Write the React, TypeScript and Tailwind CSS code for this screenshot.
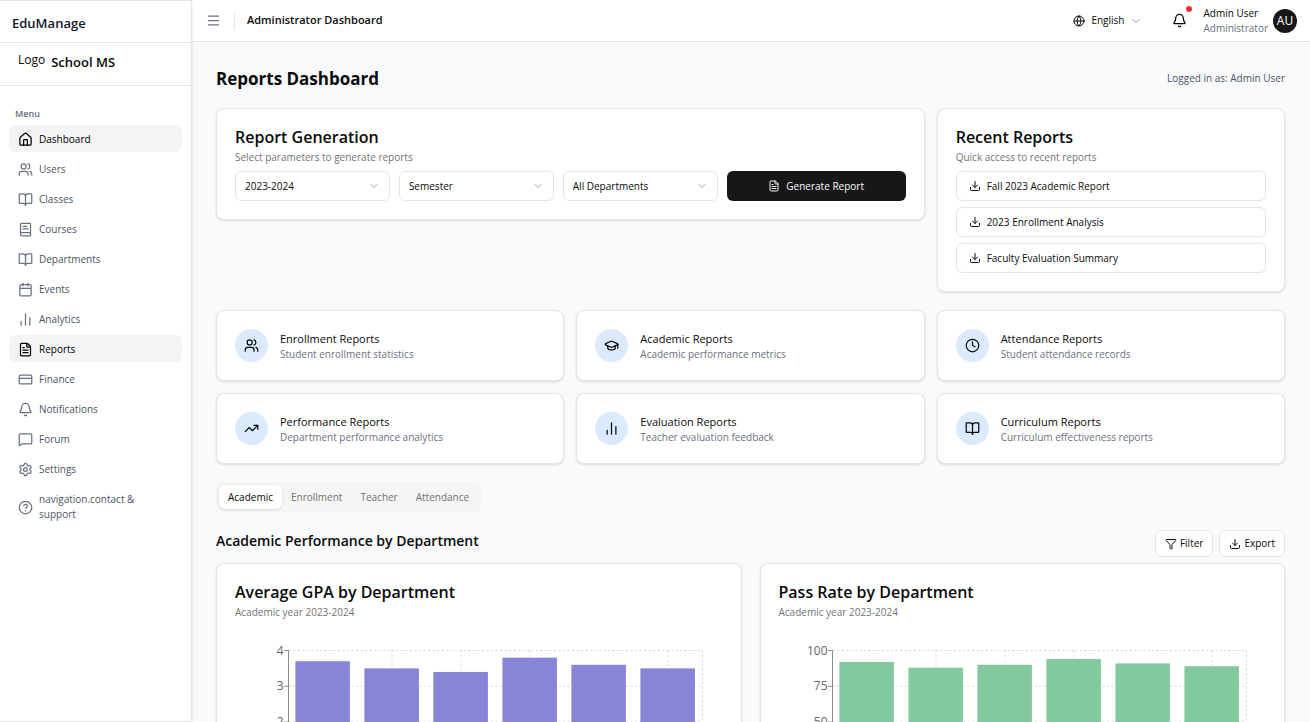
import { useLayoutEffect, useRef, useState } from "react";
import type { ReactNode } from "react";
import {
  Bell,
  BookOpen,
  BookText,
  Calendar,
  ChartNoAxesColumn,
  ChevronDown,
  CircleHelp,
  Clock,
  CreditCard,
  Download,
  FileText,
  Filter,
  Globe,
  GraduationCap,
  House,
  Menu,
  MessageSquare,
  Settings,
  TrendingUp,
  Users,
} from "lucide-react";
import type { LucideIcon } from "lucide-react";

const navItems: { label: string; icon: LucideIcon; active?: boolean }[] = [
  { label: "Dashboard", icon: House, active: true },
  { label: "Users", icon: Users },
  { label: "Classes", icon: BookOpen },
  { label: "Courses", icon: BookText },
  { label: "Departments", icon: BookOpen },
  { label: "Events", icon: Calendar },
  { label: "Analytics", icon: ChartNoAxesColumn },
  { label: "Reports", icon: FileText, active: true },
  { label: "Finance", icon: CreditCard },
  { label: "Notifications", icon: Bell },
  { label: "Forum", icon: MessageSquare },
  { label: "Settings", icon: Settings },
  { label: "navigation.contact & support", icon: CircleHelp },
];

const categories: { title: string; text: string; icon: LucideIcon }[] = [
  { title: "Enrollment Reports", text: "Student enrollment statistics", icon: Users },
  { title: "Academic Reports", text: "Academic performance metrics", icon: GraduationCap },
  { title: "Attendance Reports", text: "Student attendance records", icon: Clock },
  { title: "Performance Reports", text: "Department performance analytics", icon: TrendingUp },
  { title: "Evaluation Reports", text: "Teacher evaluation feedback", icon: ChartNoAxesColumn },
  { title: "Curriculum Reports", text: "Curriculum effectiveness reports", icon: BookOpen },
];

const recentReports = ["Fall 2023 Academic Report", "2023 Enrollment Analysis", "Faculty Evaluation Summary"];
const tabs = ["Academic", "Enrollment", "Teacher", "Attendance"];

function Card({ className = "", children }: { className?: string; children: ReactNode }) {
  return (
    <section className={`rounded-lg border border-neutral-200 bg-white p-[18px] shadow-sm ${className}`}>
      {children}
    </section>
  );
}

function CardHeading({ title, text }: { title: string; text: string }) {
  return (
    <header>
      <h3 className="text-[16px] leading-5 font-semibold">{title}</h3>
      <p className="mt-0.5 text-[10px] leading-4 text-neutral-500">{text}</p>
    </header>
  );
}

function SelectBox({ label, options }: { label: string; options: string[] }) {
  return (
    <div className="relative flex-1">
      <select
        aria-label={label}
        className="h-[30px] w-full appearance-none rounded-md border border-neutral-200 bg-white pl-[9px] text-[10px]"
      >
        {options.map((option) => (
          <option key={option}>{option}</option>
        ))}
      </select>
      <ChevronDown className="pointer-events-none absolute top-[9px] right-2.5 size-3 text-neutral-400" />
    </div>
  );
}

function BarChart({ values, max, color, label }: { values: number[]; max: number; color: string; label: string }) {
  const box = useRef<HTMLDivElement>(null);
  const [width, setWidth] = useState(487);

  useLayoutEffect(() => {
    const node = box.current;
    if (!node) return;
    const observer = new ResizeObserver(() => setWidth(node.clientWidth));
    observer.observe(node);
    setWidth(node.clientWidth);
    return () => observer.disconnect();
  }, []);

  const left = 53.5;
  const right = width - 20.5;
  const top = 12.5;
  const height = 143;
  const band = (right - left) / values.length;
  const gridColumns = [1.5, 2.5, 3.5, 5.5, 6];

  return (
    <div ref={box} className="mt-[18px] w-full">
      <svg width={width} height={190} role="img" aria-label={label} className="block">
        <g stroke="#cccccc" strokeWidth="0.75" strokeDasharray="2.25 2.25">
          {[0, 1, 2, 3].map((i) => (
            <line key={i} x1={left} x2={right} y1={top + (i * height) / 4} y2={top + (i * height) / 4} />
          ))}
          {gridColumns.map((c) => (
            <line key={c} x1={left + c * band} x2={left + c * band} y1={top} y2={top + height} />
          ))}
        </g>
        <g stroke="#666666" strokeWidth="0.75">
          <line x1={left} x2={left} y1={top} y2={top + height} />
          {[0, 1, 2, 3, 4].map((i) => (
            <line key={i} x1={left - 4.5} x2={left} y1={top + (i * height) / 4} y2={top + (i * height) / 4} />
          ))}
        </g>
        <g fill="#666666" fontSize="12" textAnchor="end">
          {[0, 1, 2, 3, 4].map((i) => (
            <text key={i} x={left - 5} y={top + (i * height) / 4 + 4}>
              {max - (i * max) / 4}
            </text>
          ))}
        </g>
        <g fill={color}>
          {values.map((v, i) => (
            <rect
              key={i}
              x={left + band * (i + 0.1)}
              y={top + height * (1 - v / max)}
              width={band * 0.79}
              height={(height * v) / max}
            />
          ))}
        </g>
      </svg>
    </div>
  );
}

export default function App() {
  const [tab, setTab] = useState("Academic");

  return (
    <div className="flex h-screen overflow-hidden bg-gray-50 font-['Open_Sans','Noto_Sans',sans-serif] text-[10px] text-neutral-950">
      <aside className="z-10 flex w-48 shrink-0 flex-col border border-l-0 border-neutral-200 bg-white shadow-sm">
        <div className="flex h-[42px] items-center border-b border-neutral-200 px-3 pt-1">
          <span className="text-[13px] font-semibold text-gray-900">EduManage</span>
        </div>
        <div className="flex h-[43px] items-center gap-1.5 border-b border-neutral-200 pr-3 pb-0.5 pl-[18px]">
          <span className="pb-1.5 text-[12px]">Logo</span>
          <span className="text-[13px] font-semibold">School MS</span>
        </div>
        <nav className="px-[9px] pt-[18px]">
          <h2 className="flex h-[21px] items-center px-1.5 pb-0.5 text-[9px] font-semibold text-gray-500">Menu</h2>
          <ul className="flex flex-col gap-[3px]">
            {navItems.map(({ label, icon: Icon, active }) => (
              <li key={label}>
                <a
                  href="#"
                  className={`flex items-center gap-1.5 rounded-md px-[9px] pt-[7px] pb-[5px] leading-[15px] ${
                    active ? "bg-gray-100 text-black" : "text-gray-600"
                  }`}
                >
                  <Icon className={`size-[15px] shrink-0 ${active ? "text-black" : "text-gray-500"}`} />
                  <span className="max-w-[110px]">{label}</span>
                </a>
              </li>
            ))}
          </ul>
        </nav>
      </aside>

      <div className="flex min-w-0 flex-1 flex-col">
        <header className="flex h-[42px] shrink-0 items-center border-b border-neutral-200 bg-white pr-[13px] pl-3.5">
          <button type="button" aria-label="Toggle menu" className="text-gray-500">
            <Menu className="size-[15px]" />
          </button>
          <span className="mr-3 ml-[13px] h-[18px] w-px bg-neutral-200" />
          <h1 className="text-[11px] font-semibold">Administrator Dashboard</h1>
          <div className="ml-auto flex items-center">
            <button type="button" className="flex items-center gap-1.5">
              <Globe className="size-3" />
              <span>English</span>
              <ChevronDown className="size-3 text-neutral-500" strokeWidth={1.5} />
            </button>
            <button type="button" aria-label="Notifications" className="relative mr-4 ml-[30px]">
              <Bell className="size-[15px]" />
              <span className="absolute -top-[7px] -right-[5px] size-1.5 rounded-full bg-red-500" />
            </button>
            <div className="mr-[5px] flex flex-col leading-[15px]">
              <span>Admin User</span>
              <span className="text-gray-500">Administrator</span>
            </div>
            <span className="flex size-6 items-center justify-center rounded-full bg-neutral-900 text-[12px] text-white">
              AU
            </span>
          </div>
        </header>

        <main className="flex-1 overflow-y-auto pt-6 pr-[25px] pb-6 pl-6 [scrollbar-width:none]">
          <div className="flex h-6 items-center justify-between">
            <h2 className="pt-0.5 text-[17px] font-bold">Reports Dashboard</h2>
            <p className="text-gray-600">Logged in as: Admin User</p>
          </div>

          <div className="mt-[18px] grid grid-cols-3 items-start gap-3">
            <Card className="col-span-2">
              <CardHeading title="Report Generation" text="Select parameters to generate reports" />
              <form className="mt-1.5 flex gap-[9px]" onSubmit={(e) => e.preventDefault()}>
                <SelectBox label="Academic year" options={["2023-2024"]} />
                <SelectBox label="Period" options={["Semester"]} />
                <SelectBox label="Department" options={["All Departments"]} />
                <button
                  type="submit"
                  className="flex h-[30px] w-[179px] items-center justify-center gap-1.5 rounded-md bg-neutral-900 text-neutral-50"
                >
                  <FileText className="size-3" />
                  Generate Report
                </button>
              </form>
            </Card>
            <Card>
              <CardHeading title="Recent Reports" text="Quick access to recent reports" />
              <ul className="mt-1.5 flex flex-col gap-1.5">
                {recentReports.map((name) => (
                  <li key={name}>
                    <button
                      type="button"
                      className="flex h-[30px] w-full items-center gap-1.5 rounded-md border border-neutral-200 bg-white px-3"
                    >
                      <Download className="size-3" />
                      {name}
                    </button>
                  </li>
                ))}
              </ul>
            </Card>
          </div>

          <div className="mt-[18px] grid grid-cols-3 gap-3">
            {categories.map(({ title, text, icon: Icon }) => (
              <Card key={title} className="flex items-center gap-3">
                <span className="flex size-[33px] shrink-0 items-center justify-center rounded-full bg-blue-100">
                  <Icon className="size-[15px]" />
                </span>
                <div>
                  <h3 className="pt-0.5 text-[11px] leading-4">{title}</h3>
                  <p className="leading-[15px] text-gray-500">{text}</p>
                </div>
              </Card>
            ))}
          </div>

          <div role="tablist" className="mt-[18px] inline-flex h-[30px] rounded-lg bg-neutral-100 p-[3px] align-top">
            {tabs.map((name) => (
              <button
                key={name}
                type="button"
                role="tab"
                aria-selected={tab === name}
                onClick={() => setTab(name)}
                className={`rounded-md px-[9px] ${tab === name ? "bg-white shadow-sm" : "text-neutral-500"}`}
              >
                {name}
              </button>
            ))}
          </div>

          <div className="mt-[18px] flex h-[27px] items-center justify-between">
            <h2 className="pb-1.5 text-[14px] font-semibold">Academic Performance by Department</h2>
            <div className="flex gap-1.5">
              <button
                type="button"
                className="flex h-[27px] items-center gap-[3px] rounded-md border border-neutral-200 bg-white px-[9px]"
              >
                <Filter className="size-3" />
                Filter
              </button>
              <button
                type="button"
                className="flex h-[27px] items-center gap-[3px] rounded-md border border-neutral-200 bg-white px-[9px]"
              >
                <Download className="size-3" />
                Export
              </button>
            </div>
          </div>

          <div className="mt-1.5 grid grid-cols-2 gap-[18px]">
            <Card>
              <CardHeading title="Average GPA by Department" text="Academic year 2023-2024" />
              <BarChart
                label="Average GPA by department"
                values={[3.7, 3.5, 3.4, 3.8, 3.6, 3.5]}
                max={4}
                color="#8884d8"
              />
            </Card>
            <Card>
              <CardHeading title="Pass Rate by Department" text="Academic year 2023-2024" />
              <BarChart
                label="Pass rate by department"
                values={[92, 88, 90, 94, 91, 89]}
                max={100}
                color="#82ca9d"
              />
            </Card>
          </div>
        </main>
      </div>
    </div>
  );
}
